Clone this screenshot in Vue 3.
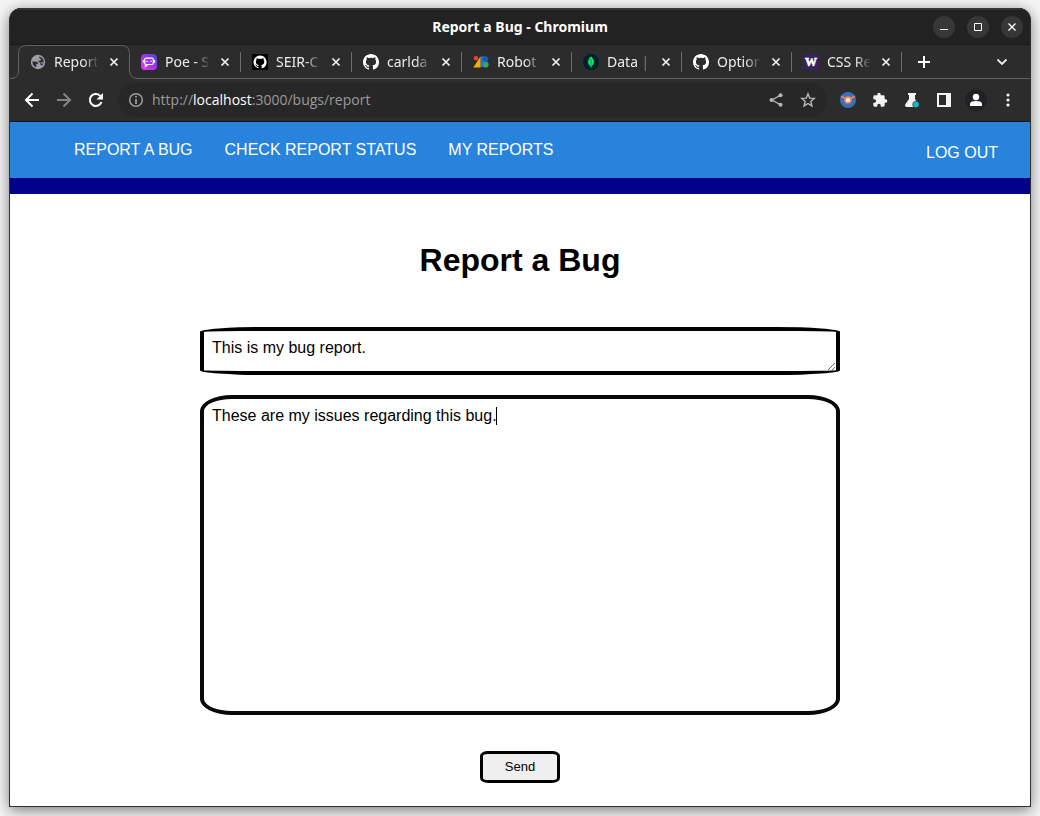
<script setup>
import { ref } from 'vue'

const tabs = [
  { title: 'Report', icon: 'globe' },
  { title: 'Poe - S', icon: 'poe' },
  { title: 'SEIR-C', icon: 'githubDark' },
  { title: 'carlda', icon: 'github' },
  { title: 'Robot', icon: 'fonts' },
  { title: 'Data |', icon: 'mongo' },
  { title: 'Option', icon: 'github' },
  { title: 'CSS Re', icon: 'w' }
]
const links = ['REPORT A BUG', 'CHECK REPORT STATUS', 'MY REPORTS']
const subject = ref('This is my bug report.')
const details = ref('These are my issues regarding this bug.')
const cat = 'M8 0C3.58 0 0 3.58 0 8c0 3.54 2.29 6.53 5.47 7.59.4.07.55-.17.55-.38 0-.19-.01-.82-.01-1.49-2.01.37-2.53-.49-2.69-.94-.09-.23-.48-.94-.82-1.13-.28-.15-.68-.52-.01-.53.63-.01 1.08.58 1.23.82.72 1.21 1.87.87 2.33.66.07-.52.28-.87.51-1.07-1.78-.2-3.64-.89-3.64-3.95 0-.87.31-1.59.82-2.15-.08-.2-.36-1.02.08-2.12 0 0 .67-.21 2.2.82.64-.18 1.32-.27 2-.27s1.36.09 2 .27c1.53-1.04 2.2-.82 2.2-.82.44 1.1.16 1.92.08 2.12.51.56.82 1.27.82 2.15 0 3.07-1.87 3.75-3.65 3.95.29.25.54.73.54 1.48 0 1.07-.01 1.93-.01 2.2 0 .21.15.46.55.38A8.01 8.01 0 0 0 16 8c0-4.42-3.58-8-8-8z'
</script>

<template>
  <div class="desktop">
    <div class="window">
      <header class="titlebar">
        <span class="window-title">Report a Bug - Chromium</span>
        <div class="controls">
          <button aria-label="Minimize"><svg width="10" height="10"><path d="M1 7.500h8" stroke="#fff" /></svg></button>
          <button aria-label="Maximize"><svg width="10" height="10"><path d="M1.500 1.500h7v7h-7z" fill="none" stroke="#fff" /></svg></button>
          <button aria-label="Close"><svg width="10" height="10"><path d="M1.500 1.500l7 7m0-7l-7 7" stroke="#fff" stroke-width="1.300" /></svg></button>
        </div>
      </header>

      <div class="strip">
        <svg class="outline" width="128" height="34" aria-hidden="true">
          <path d="M0 33.500C6 33.500 8.500 31 8.500 25V8.500Q8.500.5 16.500.5h95q8 0 8 8V25q0 8.500 8.500 8.500V34H0z" fill="#2c2c2c" />
          <path d="M0 33.500C6 33.500 8.500 31 8.500 25V8.500Q8.500.5 16.500.5h95q8 0 8 8V25q0 8.500 8.500 8.500" fill="none" stroke="#616161" />
        </svg>
        <div class="tabs">
          <div v-for="(tab, i) in tabs" :key="i" class="tab" :class="{ active: i === 0 }">
            <svg class="favicon" width="16" height="16" viewBox="0 0 16 16" aria-hidden="true">
              <template v-if="tab.icon === 'globe'">
                <circle cx="8" cy="8" r="7.200" fill="#9aa0a6" />
                <path d="M2.400 7.500h3.200q2.600.3 2.600 2.600H6.300v3.200Q2.600 12 2.400 7.500zM9 2.500q4.500.8 4.700 5.500-.3 2.600-1.800 3.800-.4-1.300-1.700-1.300V9q0-.8-.8-.8h-1V6.500h1.500q.8 0 .8-.8V4.500H9.600z" fill="#2c2c2c" />
                <path d="M8.500 5.200h2v1.500h-2zM10.800 8.200h2.700v1.300h-2.700z" fill="#9aa0a6" />
              </template>
              <template v-else-if="tab.icon === 'poe'">
                <defs><linearGradient id="poe" x1="0" y1="1" x2="1" y2="0"><stop offset="0" stop-color="#f03df2" /><stop offset=".5" stop-color="#a033f4" /><stop offset="1" stop-color="#434bc9" /></linearGradient></defs>
                <rect width="16" height="16" rx="4" fill="url(#poe)" />
                <rect x="3.700" y="4.200" width="8.600" height="6.300" rx="1.500" fill="none" stroke="#fff" stroke-width="1.200" />
                <path d="M2.500 6v2.800m11-2.800v2.800M6 6.700v1.300m4-1.300v1.300M4.500 10.500v2l2-1.500" fill="none" stroke="#fff" stroke-width="1.300" />
              </template>
              <template v-else-if="tab.icon === 'githubDark'">
                <rect width="16" height="16" fill="#000" />
                <path :d="cat" fill="#fff" transform="translate(1.500 1.500) scale(.82)" />
              </template>
              <path v-else-if="tab.icon === 'github'" :d="cat" fill="#fff" />
              <template v-else-if="tab.icon === 'fonts'">
                <circle cx="3" cy="4.300" r="2.300" fill="#ea4335" />
                <path d="M7.500 2.500h5.300a2.800 2.800 0 0 1 0 5.500v5H7.500z" fill="#1a73e8" />
                <circle cx="12.500" cy="5.200" r="2.700" fill="#185abc" />
                <path d="M12 7.700a2.900 2.900 0 0 1 0 5.800z" fill="#34a853" />
                <circle cx="12.800" cy="10.600" r="2.900" fill="#34a853" />
                <path d="M7.500 2.500v11H.3z" fill="#f9ab00" />
              </template>
              <template v-else-if="tab.icon === 'mongo'">
                <circle cx="8" cy="8" r="8" fill="#001e2b" />
                <path d="M8 2.500c3.700 3.500 4 7 .5 10v1h-1v-1C4 9.500 4.300 6 8 2.500z" fill="#00ed64" />
                <path d="M8 5v8" stroke="#00873d" stroke-width=".8" />
              </template>
              <template v-else>
                <rect width="16" height="16" fill="#38245c" />
                <text x="8" y="12" text-anchor="middle" class="w-mark">W</text>
              </template>
            </svg>
            <span class="tab-title">{{ tab.title }}</span>
            <button class="tab-close" aria-label="Close tab"><svg width="10" height="10"><path d="M1.500 1.500l7 7m0-7l-7 7" stroke="#f1f1f1" stroke-width="1.700" /></svg></button>
          </div>
        </div>
        <button class="new-tab" aria-label="New tab"><svg width="12" height="12"><path d="M0 6h12M6 0v12" stroke="#fff" stroke-width="2" /></svg></button>
        <button class="tab-search" aria-label="Search tabs"><svg width="12" height="8"><path d="M1.500 1.500L6 6l4.500-4.500" fill="none" stroke="#eee" stroke-width="1.800" /></svg></button>
      </div>

      <div class="toolbar">
        <div class="nav-buttons">
          <button aria-label="Back"><svg width="16" height="16"><path d="M15 8H2m6.500-6.500L2 8l6.500 6.500" fill="none" stroke="#fff" stroke-width="2" /></svg></button>
          <button aria-label="Forward"><svg width="16" height="16"><path d="M1 8h13M7.500 1.500L14 8l-6.500 6.500" fill="none" stroke="#858585" stroke-width="2" /></svg></button>
          <button aria-label="Reload"><svg width="16" height="16"><path d="M13.500 10A6 6 0 1 1 12 3.600L14 5.500" fill="none" stroke="#fff" stroke-width="2" /><path d="M15 1v6.500H8.500z" fill="#fff" /></svg></button>
        </div>
        <div class="omnibox">
          <svg width="16" height="16" aria-hidden="true"><circle cx="8" cy="8" r="6.300" fill="none" stroke="#9b9fa2" stroke-width="1.500" /><path d="M8 4v1.700M8 7v5" stroke="#9b9fa2" stroke-width="1.700" /></svg>
          <div class="address">http://<span class="host">localhost</span>:3000/bugs/report</div>
          <button aria-label="Share"><svg width="16" height="16"><path d="M12 3.500L4 8l8 4.500" fill="none" stroke="#b8b8b8" stroke-width="1.400" /><circle cx="12.500" cy="3.200" r="2" fill="#b8b8b8" /><circle cx="3.500" cy="8" r="2" fill="#b8b8b8" /><circle cx="12.500" cy="12.800" r="2" fill="#b8b8b8" /></svg></button>
          <button aria-label="Bookmark"><svg width="16" height="16"><path d="M8 1.800l1.700 4.300 4.600.3-3.500 3 1.100 4.500L8 11.500l-3.900 2.400 1.100-4.500-3.500-3 4.600-.3z" fill="none" stroke="#b8b8b8" stroke-width="1.400" /></svg></button>
        </div>
        <div class="extensions">
          <button aria-label="Extension"><svg width="16" height="16"><circle cx="8" cy="8" r="8" fill="#3871bd" /><path d="M1 4.200l4.500 2.300m9.500-2.300l-4.500 2.300" stroke="#ff8348" stroke-width="1.700" /><circle cx="8" cy="8" r="2.900" fill="#fff" stroke="#ff8348" stroke-width="1.700" /></svg></button>
          <button aria-label="Extensions"><svg width="16" height="16" viewBox="0 0 24 24"><path d="M20.500 11H19V7a2 2 0 0 0-2-2h-4V3.500a2.500 2.500 0 0 0-5 0V5H4a2 2 0 0 0-2 2v3.800h1.500a2.700 2.700 0 0 1 0 5.400H2V20a2 2 0 0 0 2 2h3.800v-1.500a2.700 2.700 0 0 1 5.400 0V22H17a2 2 0 0 0 2-2v-4h1.500a2.500 2.500 0 0 0 0-5z" fill="#f3f3f3" /></svg></button>
          <button aria-label="Experiments"><svg width="16" height="16"><path d="M4 1h8v2h-1v4l4 6q0 2-2 2H3q-3-.5-1.500-3L5 7V3H4z" fill="#f3f3f3" /><circle cx="12" cy="12.500" r="3.300" fill="#15b5cb" stroke="#2c2c2c" stroke-width=".6" /></svg></button>
          <button aria-label="Side panel"><svg width="16" height="16"><path d="M1 1h14v14H1zM3 3v10h7V3z" fill="#f3f3f3" fill-rule="evenodd" /></svg></button>
          <button class="profile" aria-label="Profile"><svg width="16" height="16"><circle cx="8" cy="5" r="3.200" fill="#fff" /><path d="M2 14v-2q0-3 6-3t6 3v2z" fill="#fff" /></svg></button>
          <button aria-label="Menu"><svg width="16" height="16"><circle cx="8" cy="3" r="1.600" fill="#f3f3f3" /><circle cx="8" cy="8" r="1.600" fill="#f3f3f3" /><circle cx="8" cy="13" r="1.600" fill="#f3f3f3" /></svg></button>
        </div>
      </div>

      <div class="page">
        <nav class="site-nav">
          <div class="links"><a v-for="link in links" :key="link" href="#">{{ link }}</a></div>
          <a class="logout" href="#">LOG OUT</a>
        </nav>
        <main>
          <h1>Report a Bug</h1>
          <form @submit.prevent>
            <textarea v-model="subject" class="subject" aria-label="Subject" spellcheck="false"></textarea>
            <div class="details-field">
              <textarea v-model="details" class="details" aria-label="Details" spellcheck="false"></textarea>
              <span class="caret"></span>
            </div>
            <button class="send" type="submit">Send</button>
          </form>
        </main>
      </div>
    </div>
  </div>
</template>

<style>
body { background: #fff; }
</style>

<style scoped>
* { box-sizing: border-box; }
svg { display: block; flex: none; }
button { font: inherit; }
.desktop {
  display: flex;
  min-height: 100vh;
  padding: 8px 9px 9px;
  overflow: hidden;
  background: #f4f4f4;
}
.window {
  display: flex;
  flex: 1;
  flex-direction: column;
  min-width: 0;
  overflow: hidden;
  border: 1px solid #303030;
  border-top: 0;
  border-radius: 12px 12px 0 0;
  background: #2c2c2c;
  box-shadow: 0 3px 14px rgba(0, 0, 0, 0.5);
  font-family: "Noto Sans", "Open Sans", sans-serif;
}
.titlebar {
  position: relative;
  display: flex;
  align-items: center;
  justify-content: center;
  height: 37px;
  border-top: 2px solid #353535;
  border-bottom: 1px solid #191919;
  background: #222;
}
.window-title { color: #fff; font-size: 14px; font-weight: 700; line-height: 20px; }
.controls { position: absolute; right: 7px; display: flex; gap: 12px; }
.controls button {
  display: grid;
  place-items: center;
  width: 22px;
  height: 22px;
  padding: 0;
  border: 0;
  border-radius: 50%;
  background: #373737;
}
.strip {
  position: relative;
  display: flex;
  align-items: center;
  height: 34px;
  padding-left: 9px;
  border-bottom: 1px solid #616161;
}
.outline { position: absolute; top: 0; left: 0; }
.tabs {
  position: relative;
  display: grid;
  grid-template-columns: repeat(3, 111px) repeat(5, 110px);
}
.tab {
  display: flex;
  align-items: center;
  height: 20px;
  padding: 0 10px 0 11px;
  border-right: 1px solid #6a6a6a;
}
.tab.active { border-right-color: transparent; }
.favicon { margin-right: 8px; }
.w-mark { fill: #fff; font: 700 12px "Liberation Serif", serif; stroke: #fff; stroke-width: 0.6px; }
.tab-title {
  flex: 1;
  min-width: 0;
  overflow: hidden;
  color: #ececec;
  font-size: 14px;
  line-height: 20px;
  white-space: nowrap;
  mask-image: linear-gradient(to right, #000 65%, transparent);
}
.tab-close, .new-tab, .tab-search {
  display: grid;
  place-items: center;
  padding: 0;
  border: 0;
  background: none;
}
.tab-close { width: 10px; height: 16px; margin-left: 10px; }
.new-tab { width: 24px; height: 24px; margin-left: 10px; }
.tab-search { width: 24px; height: 24px; margin-right: 16px; margin-left: auto; }
.toolbar {
  display: flex;
  align-items: center;
  height: 43px;
  padding: 0 14px;
  border-bottom: 1px solid #161616;
}
.nav-buttons, .extensions { display: flex; gap: 16px; }
.toolbar button {
  display: grid;
  place-items: center;
  width: 16px;
  height: 16px;
  padding: 0;
  border: 0;
  background: none;
}
.omnibox {
  display: flex;
  flex: 1;
  align-items: center;
  gap: 16px;
  height: 34px;
  margin: 0 13px 0 14px;
  padding: 0 11px 0 10px;
  border-radius: 17px;
  background: #272727;
}
.address {
  flex: 1;
  margin-left: -8px;
  color: #9a9a9a;
  font-family: "Open Sans", "Noto Sans", sans-serif;
  font-size: 14px;
  line-height: 20px;
}
.host { color: #fff; }
.toolbar .profile { position: relative; z-index: 0; }
.profile::before {
  position: absolute;
  z-index: -1;
  inset: -3px;
  border-radius: 50%;
  background: #202124;
  content: "";
}
.page {
  flex: 1;
  background: #fff;
  color: #000;
  font-family: "Liberation Sans", Arial, sans-serif;
  font-size: 16px;
  line-height: 18px;
}
.site-nav {
  display: flex;
  align-items: flex-start;
  justify-content: space-between;
  padding: 19px 32px 16px 64px;
  border-bottom: 16px solid #00008b;
  background: #2883dd;
}
.site-nav a { color: #fff; text-decoration: none; }
.links { display: flex; gap: 32px; }
.site-nav .logout { padding-top: 3px; }
main { padding: 48px 16px 23px; }
h1 {
  margin: 0 0 48px;
  font-size: 32px;
  font-weight: 700;
  line-height: 37px;
  text-align: center;
}
form {
  display: flex;
  flex-direction: column;
  align-items: center;
  max-width: 640px;
  margin: 0 auto;
}
textarea {
  display: block;
  width: 100%;
  margin: 0;
  padding: 8px;
  border: 4px solid #000;
  outline: 0;
  background: #fff;
  color: #000;
  font: inherit;
}
.subject { height: 48px; margin-bottom: 20px; border-radius: 10%; overflow: hidden; }
.details-field { position: relative; width: 100%; margin-bottom: 36px; }
.details { height: 320px; border-color: #080808; border-radius: 5%; resize: none; }
.caret {
  position: absolute;
  top: 12px;
  left: 296px;
  width: 1px;
  height: 18px;
  background: #000;
}
.send {
  width: 80px;
  height: 32px;
  padding: 0;
  border: 3px solid #000;
  border-radius: 8px / 5px;
  background: #efefef;
  color: #000;
  font-size: 13px;
}
</style>
